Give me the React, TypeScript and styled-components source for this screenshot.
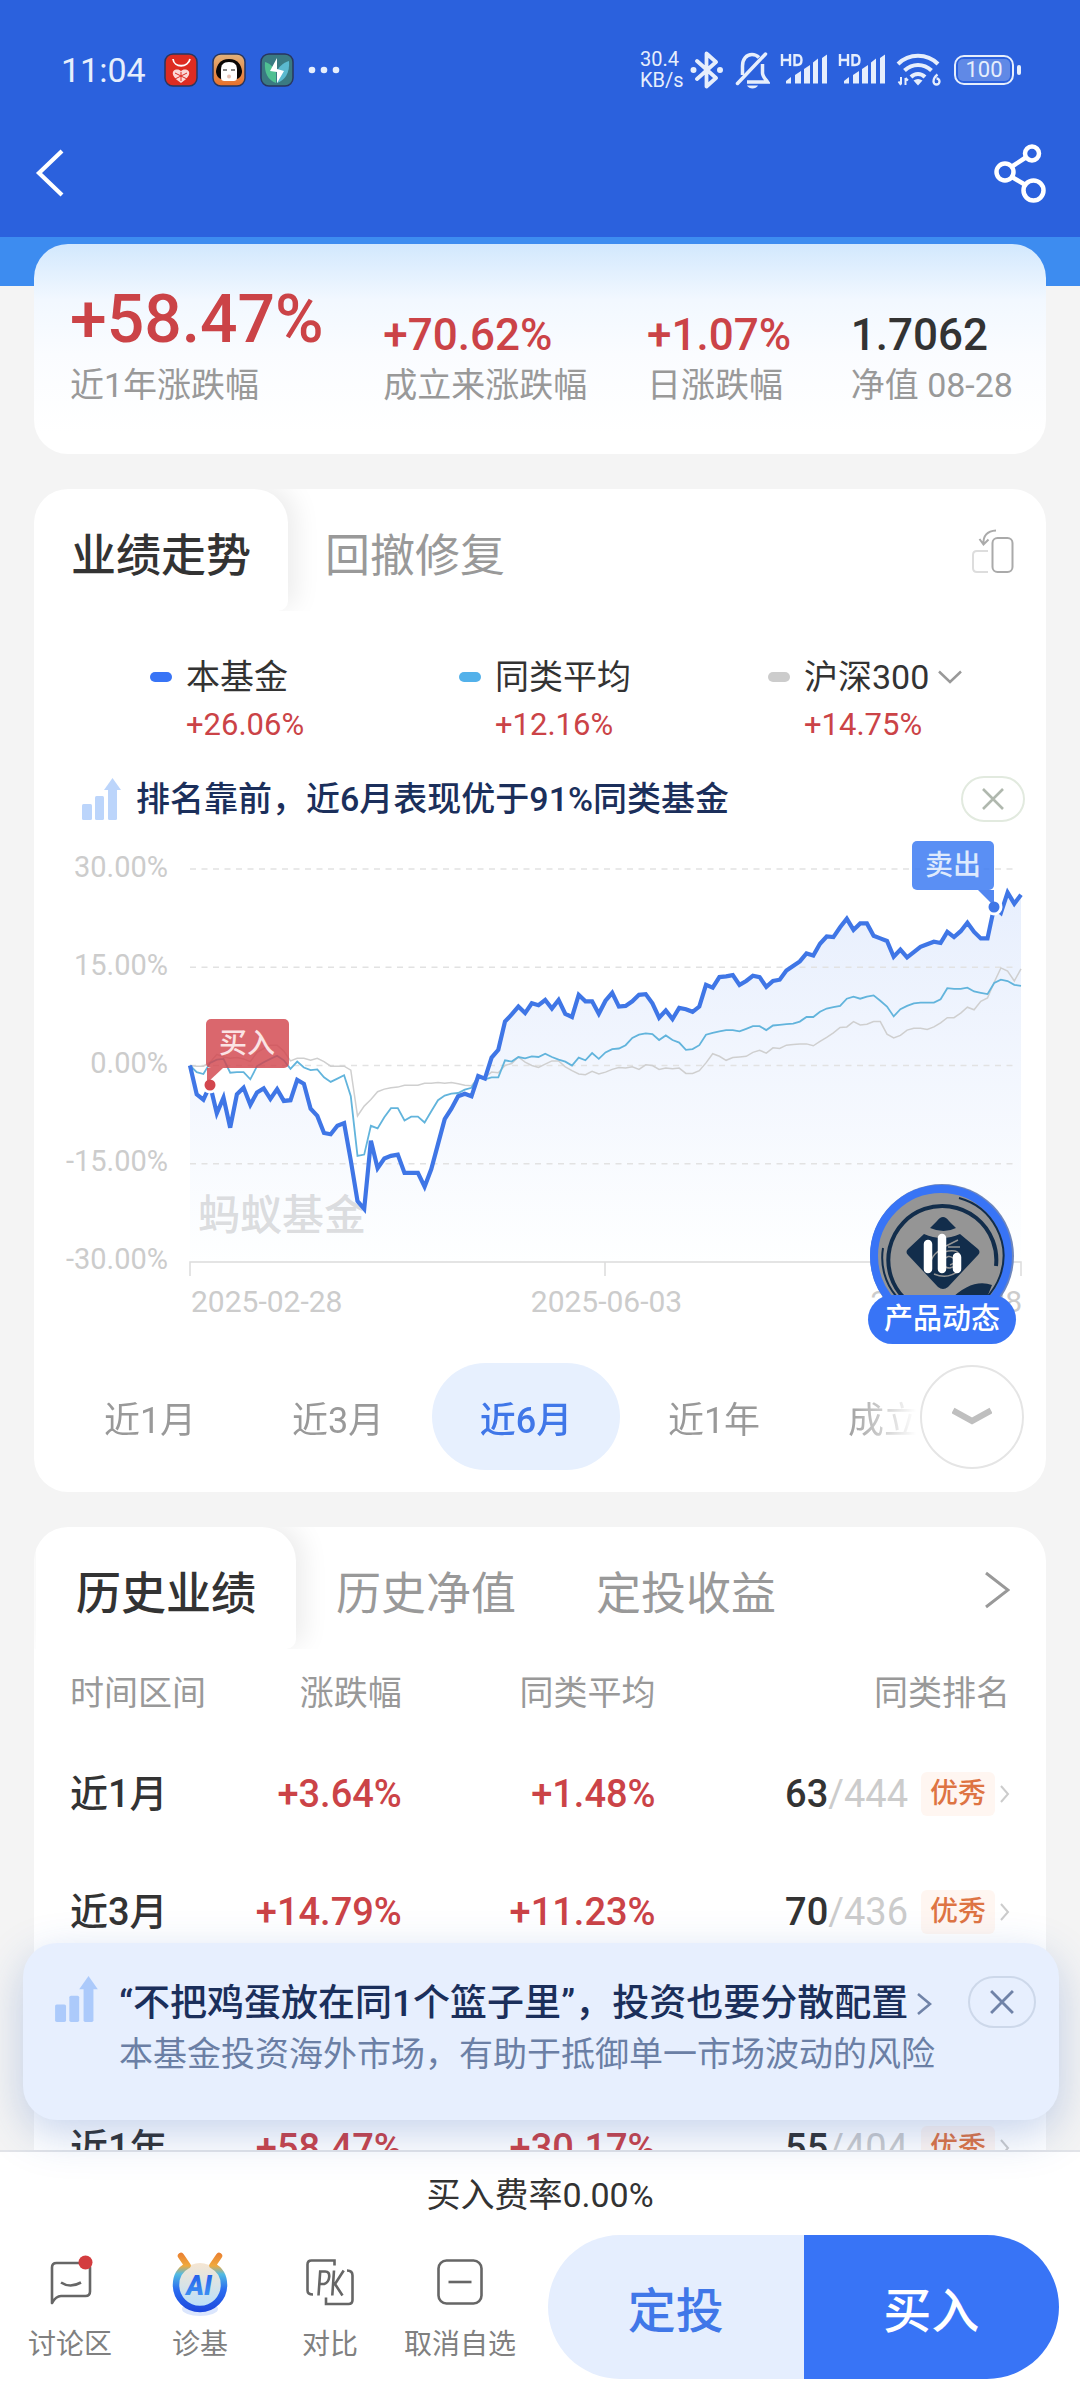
import React, { useState } from "react";
import styled, { createGlobalStyle } from "styled-components";

const GlobalStyle = createGlobalStyle`
  * { box-sizing: border-box; }
  html, body { margin: 0; padding: 0; }
  body {
    font-family: Roboto, "Noto Sans CJK SC", sans-serif;
    font-size: 34px;
    color: #333;
    background: #f4f4f4;
  }
  button, select {
    font: inherit;
    color: inherit;
    background: none;
    border: 0;
    padding: 0;
    margin: 0;
    cursor: pointer;
  }
  svg { display: block; flex: none; }
`;

const red = "#cb4347";
const blue = "#3874f6";
const gray = "#999";
const navy = "#1b2f5b";

/* ---------- page shell ---------- */

const Screen = styled.div`
  display: flex;
  flex-direction: column;
  height: 100vh;
  overflow: hidden;
`;

const Header = styled.header`
  flex: none;
  padding-top: 44px;
  background: #2b61dd;
  color: #e6eefc;
`;

const StatusBar = styled.div`
  display: flex;
  align-items: center;
  justify-content: space-between;
  height: 52px;
  padding: 0 59px 0 61px;
`;

const StatusGroup = styled.div<{ $gap: number }>`
  display: flex;
  align-items: center;
  gap: ${(p) => p.$gap}px;
`;

const Clock = styled.time`
  font-size: 34px;
  line-height: 40px;
  margin-right: 4px;
`;

const NetSpeed = styled.div`
  width: 40px;
  font-size: 20px;
  line-height: 21px;
`;

const Battery = styled.div`
  display: flex;
  align-items: center;
  gap: 3px;
  margin-left: 2px;
  &::after {
    content: "";
    width: 4px;
    height: 10px;
    border-radius: 2px;
    background: #e6eefc;
  }
`;

const BatteryBody = styled.div`
  width: 60px;
  height: 30px;
  padding: 2px;
  border: 2px solid #e6eefc;
  border-radius: 10px;
  span {
    display: block;
    border-radius: 5px;
    background: #6089e6;
    font-size: 22px;
    line-height: 22px;
    text-align: center;
  }
`;

const NavBar = styled.nav`
  display: flex;
  align-items: center;
  justify-content: space-between;
  height: 141px;
  padding: 12px 34px 0 34px;
`;

const Content = styled.main`
  flex: 1;
  min-height: 0;
  overflow-y: auto;
  scrollbar-width: none;
  display: flex;
  flex-direction: column;
  gap: 35px;
  padding: 7px 34px 0;
  background: linear-gradient(#3d8cf0 49px, #f4f4f4 49px);
`;

const Card = styled.section`
  flex: none;
  border-radius: 34px;
  background: #fff;
  overflow: hidden;
`;

/* ---------- summary ---------- */

const Summary = styled(Card)`
  display: flex;
  align-items: flex-end;
  justify-content: space-between;
  padding: 32px 33px 48px 36px;
  background: linear-gradient(#d2e8fd 0, #f2f8ff 56px, #fafcff 110px, #fff 190px);
`;

const StatValue = styled.div<{ $big?: boolean; $dark?: boolean }>`
  font-size: ${(p) => (p.$big ? 66 : 44)}px;
  line-height: ${(p) => (p.$big ? 88 : 58)}px;
  font-weight: 500;
  color: ${(p) => (p.$dark ? "#333" : red)};
`;

const StatLabel = styled.div`
  line-height: 42px;
  color: ${gray};
`;

/* ---------- tabs ---------- */

const Tabs = styled.div<{ $inset?: number }>`
  display: flex;
  align-items: stretch;
  height: 122px;
  margin-bottom: 2px;
  padding-left: ${(p) => p.$inset ?? 0}px;
  overflow: hidden;
`;

const Tab = styled.button<{ $active?: boolean; $pad: number }>`
  padding: 4px ${(p) => p.$pad}px 0;
  font-size: 45px;
  font-weight: ${(p) => (p.$active ? 500 : 400)};
  color: ${(p) => (p.$active ? "#333" : gray)};
  border-radius: 0 34px 10px 0;
  box-shadow: ${(p) => (p.$active ? "8px -4px 26px rgba(0, 0, 0, 0.08)" : "none")};
`;

const TabAction = styled.button<{ $right: number }>`
  margin-left: auto;
  padding: 4px ${(p) => p.$right}px 0 0;
`;

/* ---------- legend ---------- */

const Legend = styled.div`
  display: grid;
  grid-template-columns: 3fr 3fr 2fr;
  padding: 40px 72px 0 116px;
`;

const LegendItem = styled.div`
  display: grid;
  grid-template-columns: 22px auto;
  column-gap: 14px;
  align-items: center;
  justify-content: start;
  line-height: 48px;
  white-space: nowrap;
`;

const LegendDot = styled.i<{ $color: string }>`
  height: 10px;
  border-radius: 5px;
  background: ${(p) => p.$color};
`;

const LegendValue = styled.span`
  grid-column: 2;
  font-size: 31px;
  color: ${red};
`;

const IndexPicker = styled.label`
  display: flex;
  align-items: center;
  gap: 8px;
  select {
    appearance: none;
    outline: none;
    line-height: 48px;
  }
`;

/* ---------- tips ---------- */

const Tip = styled.div`
  display: flex;
  align-items: center;
  margin-top: 27px;
  padding: 0 21px 0 48px;
  color: ${navy};
  line-height: 46px;
  p {
    flex: 1;
    margin: 0 0 0 14px;
    font-weight: 500;
  }
`;

const ClosePill = styled.button<{ $tone: string; $line: string; $wide?: boolean }>`
  display: grid;
  place-items: center;
  width: ${(p) => (p.$wide ? 68 : 64)}px;
  height: ${(p) => (p.$wide ? 52 : 46)}px;
  border: 2px solid ${(p) => p.$line};
  border-radius: 26px;
  color: ${(p) => p.$tone};
`;

/* ---------- chart ---------- */

const ChartBox = styled.div`
  position: relative;
  display: grid;
  grid-template-columns: 134px 1fr;
  column-gap: 18px;
  margin: 15px 20px 0 0;
  color: #ccc;
`;

const AxisY = styled.div`
  display: flex;
  flex-direction: column;
  justify-content: space-between;
  padding: 15px 0 3px;
  font-size: 29px;
  line-height: 30px;
  text-align: right;
`;

const Plot = styled.svg`
  width: 100%;
  height: auto;
`;

const AxisX = styled.div`
  grid-column: 2;
  display: flex;
  justify-content: space-between;
  padding: 8px 4px 0 5px;
  font-size: 30px;
  line-height: 34px;
`;

const Floating = styled.button`
  position: absolute;
  right: 10px;
  top: 346px;
  display: flex;
  flex-direction: column;
  align-items: center;
  span {
    margin-top: -34px;
    padding: 0 16px;
    border-radius: 25px;
    background: ${blue};
    color: #fff;
    font-size: 29px;
    font-weight: 500;
    line-height: 49px;
    white-space: nowrap;
  }
`;

/* ---------- period switch ---------- */

const Periods = styled.div`
  display: flex;
  align-items: center;
  gap: 4px;
  margin-top: 44px;
  padding: 0 22px 22px;
`;

const PeriodList = styled.div`
  flex: 1;
  min-width: 0;
  display: flex;
  overflow: hidden;
  mask-image: linear-gradient(to left, transparent 0, #000 72px);
`;

const Period = styled.button<{ $active: boolean }>`
  flex: 0 0 188px;
  height: 107px;
  border-radius: 54px;
  font-size: 36px;
  font-weight: ${(p) => (p.$active ? 500 : 400)};
  color: ${(p) => (p.$active ? "#4077e8" : gray)};
  background: ${(p) => (p.$active ? "#e7f0fe" : "transparent")};
`;

const MoreButton = styled.button`
  display: grid;
  place-items: center;
  flex: none;
  width: 104px;
  height: 104px;
  border: 2px solid #e5e5e5;
  border-radius: 50%;
`;

/* ---------- history table ---------- */

const HistoryTable = styled.table`
  width: calc(100% - 72px);
  margin: 0 36px;
  border-collapse: collapse;
  table-layout: fixed;
  th, td {
    padding: 0;
    text-align: right;
    white-space: nowrap;
  }
  th:first-child { text-align: left; }
  thead th {
    height: 84px;
    padding-bottom: 6px;
    font-weight: 400;
    color: ${gray};
  }
  tbody th, tbody td {
    height: 118px;
    font-size: 38px;
    line-height: 44px;
    font-weight: 500;
  }
`;

const Col = styled.col<{ $share?: string }>`
  width: ${(p) => p.$share ?? "auto"};
`;

const Rise = styled.td`
  color: ${red};
`;

const Rank = styled.div`
  display: flex;
  align-items: center;
  justify-content: flex-end;
  small {
    font-size: 38px;
    font-weight: 400;
    color: #ccc;
  }
`;

const Badge = styled.span`
  margin: 0 4px 0 13px;
  padding: 0 9px;
  border-radius: 6px;
  background: #fff6f1;
  color: #de7443;
  font-size: 28px;
`;

/* ---------- bottom ---------- */

const Footer = styled.footer`
  position: relative;
  flex: none;
  border-top: 2px solid #e2e4e8;
  background: #fff;
`;

const Banner = styled.aside`
  position: absolute;
  left: 23px;
  right: 21px;
  bottom: calc(100% + 32px);
  display: flex;
  align-items: flex-start;
  height: 177px;
  padding: 33px 23px 0 32px;
  border-radius: 34px;
  background: #e7effe;
  box-shadow: 0 14px 44px rgba(40, 90, 180, 0.26);
`;

const BannerText = styled.div`
  flex: 1;
  margin-left: 20px;
  color: #6b7fa5;
  line-height: 50px;
  white-space: nowrap;
  a {
    display: flex;
    align-items: center;
    gap: 8px;
    margin-top: 3px;
    color: ${navy};
    font-size: 37px;
    font-weight: 500;
    text-decoration: none;
  }
  p { margin: 0; }
`;

const FeeNote = styled.p`
  margin: 0;
  padding-top: 20px;
  line-height: 46px;
  text-align: center;
`;

const ActionBar = styled.div`
  display: flex;
  align-items: center;
  padding: 17px 21px 21px 5px;
`;

const Shortcut = styled.button`
  flex: 0 1 130px;
  display: flex;
  flex-direction: column;
  align-items: center;
  gap: 8px;
  color: #808080;
  font-size: 28px;
  line-height: 40px;
  white-space: nowrap;
`;

const Trade = styled.div`
  flex: 1;
  display: flex;
  height: 144px;
  margin-left: 23px;
  border-radius: 72px;
  overflow: hidden;
`;

const TradeButton = styled.button<{ $primary?: boolean }>`
  flex: 1;
  font-size: 48px;
  font-weight: 500;
  color: ${(p) => (p.$primary ? "#fff" : "#4077e8")};
  background: ${(p) => (p.$primary ? blue : "#e5eefe")};
`;

/* ---------- icons ---------- */

const ChevronDown = () => (
  <svg width="24" height="14" viewBox="0 0 24 14" fill="none" stroke="#999" strokeWidth="2.5" aria-hidden="true">
    <path d="M1 1.5 12 12 23 1.5" />
  </svg>
);

const ChevronRight = ({ w, h, color, stroke }: { w: number; h: number; color: string; stroke: number }) => (
  <svg width={w} height={h} viewBox={`0 0 ${w} ${h}`} fill="none" stroke={color} strokeWidth={stroke} aria-hidden="true">
    <path d={`M2 2 ${w - 2} ${h / 2} 2 ${h - 2}`} />
  </svg>
);

const Cross = ({ size }: { size: number }) => (
  <svg width={size} height={size} viewBox="0 0 22 22" fill="none" stroke="currentColor" strokeWidth="2.6" aria-hidden="true">
    <path d="M1 1 21 21M21 1 1 21" />
  </svg>
);

const Bars = ({ w, h, color }: { w: number; h: number; color: string }) => (
  <svg width={w} height={h} viewBox="0 0 40 42" fill={color} aria-hidden="true">
    <rect x="0" y="26" width="10" height="16" rx="1.5" />
    <rect x="13" y="18" width="9" height="24" rx="1.5" />
    <rect x="26" y="9" width="9" height="33" rx="1.5" />
    <path d="M30.500 0 39 12H22z" />
  </svg>
);

const Signal = () => (
  <svg width="48" height="34" viewBox="0 0 48 34" fill="#e6eefc" aria-hidden="true">
    <g fill="none" stroke="#e6eefc" strokeWidth="2.400">
      <path d="M2 1v12M10 1v12M2 7h8M14.500 2.200V12h2.500q4.500 0 4.500-5T17 2.200z" />
    </g>
    <path d="M6 28l5-4v6.500H6zM15 22l6-4v12.500h-6zM24 16l6-4v18.500h-6zM33 9.500l5-4v25h-5zM42 5l5-3.500v29h-5z" />
  </svg>
);

const AppMall = () => (
  <svg width="34" height="34" viewBox="0 0 34 34" aria-hidden="true">
    <rect x="1" y="1" width="32" height="32" rx="8" fill="#dd2c22" stroke="#29365e" strokeWidth="1.500" />
    <path d="M9 6c1 9 15 9 17 0" fill="none" stroke="#fff" strokeWidth="1.800" />
    <path d="M17 30C8 24 8 20 9.500 18c2-2 6-2 7.500.5 1.500-2.500 5.500-2.500 7.500-.5 1.500 2 1.500 6-7.500 12z" fill="#fbd9d6" />
    <path d="M11 20l12 6M23 20l-12 6M17 19v9" stroke="#dd2c22" strokeWidth="1" />
  </svg>
);

const AppFace = () => (
  <svg width="34" height="34" viewBox="0 0 34 34" aria-hidden="true">
    <defs>
      <linearGradient id="face" x2="0" y2="1">
        <stop stopColor="#e2b27c" />
        <stop offset="1" stopColor="#e8702a" />
      </linearGradient>
    </defs>
    <rect x="1" y="1" width="32" height="32" rx="8" fill="url(#face)" stroke="#29365e" strokeWidth="1.500" />
    <path d="M17 6C8 6 5 12 4 18c0 4 2 7 5 8h16c3-1 5-4 5-8C29 12 26 6 17 6z" fill="#0a0706" />
    <path d="M17 9c-6 0-8 3-8 8v7c0 3 1 4 4 4h8c3 0 4-1 4-4v-7c0-5-2-8-8-8z" fill="#fff" />
    <path d="M11 17h4M19 17h4" stroke="#111" strokeWidth="1.200" />
    <circle cx="17" cy="23.500" r="2" fill="#e6c1b4" />
  </svg>
);

const AppBolt = () => (
  <svg width="34" height="34" viewBox="0 0 34 34" aria-hidden="true">
    <rect x="1" y="1" width="32" height="32" rx="8" fill="#3a7a82" stroke="#29365e" strokeWidth="1.500" />
    <path d="M5 9c4 1 8 4 11 10v11C8 27 4 20 5 9z" fill="#4fc092" />
    <path d="M29 8c-6 2-11 6-12 11v11c8-3 13-10 12-22z" fill="#5bb9cf" />
    <path d="M17 5l-7 13 7 1v11l7-12-7-2z" fill="#fff" />
  </svg>
);

const Dots = () => (
  <svg width="32" height="8" viewBox="0 0 32 8" fill="#e6eefc" aria-hidden="true">
    <circle cx="4" cy="4" r="3.300" /><circle cx="16" cy="4" r="3.300" /><circle cx="28" cy="4" r="3.300" />
  </svg>
);

const Bluetooth = () => (
  <svg width="34" height="38" viewBox="0 0 34 38" fill="none" stroke="#e6eefc" strokeWidth="3.800" strokeLinejoin="round" strokeLinecap="round" aria-hidden="true">
    <path d="M7 10l19 17-9.500 8.500V2.500L26 11 7 28" />
    <circle cx="3.500" cy="19" r="1.500" strokeWidth="3" /><circle cx="30" cy="19" r="1.500" strokeWidth="3" />
  </svg>
);

const BellOff = () => (
  <svg width="36" height="38" viewBox="0 0 36 38" fill="none" stroke="#e6eefc" strokeWidth="3.500" aria-hidden="true">
    <path d="M3.500 32.500 31.500 3" strokeLinecap="round" />
    <path d="M8.500 24V15c0-7 4-11.500 9.500-11.500 3 0 5 1 7 3M28.500 13v9c0 3 2 5 5 9H13" />
    <path d="M13 34.500h11c-2 4-9 4-11 0z" fill="#e6eefc" stroke="none" />
  </svg>
);

const Wifi = () => (
  <svg width="46" height="34" viewBox="0 0 46 34" fill="none" stroke="#e6eefc" strokeWidth="4" aria-hidden="true">
    <path d="M2 11c11-11 29-11 40 0M8.500 17.500c8-7.500 19-7.500 27 0M15 24c4-4 10-4 14 0" />
    <path d="M17.500 27.500q4.500-3 9 0L22 32.500z" fill="#e6eefc" stroke="none" />
    <path d="M5 24v7M2.500 28.500 5 32M9.500 25v7M12 27.500 9.500 25" strokeWidth="2" />
    <path d="M41.500 21.500q-4 3-4 7a3 3 0 1 0 3-3" strokeWidth="2.300" />
  </svg>
);

const BackArrow = () => (
  <svg width="30" height="48" viewBox="0 0 30 48" fill="none" stroke="#fff" strokeWidth="4.200" aria-hidden="true">
    <path d="M28 2 5 24l23 22" />
  </svg>
);

const ShareIcon = () => (
  <svg width="52" height="60" viewBox="0 0 52 60" fill="none" stroke="#fff" strokeWidth="4.500" aria-hidden="true">
    <circle cx="11" cy="29" r="8.500" /><circle cx="38" cy="10.500" r="7" /><circle cx="39.500" cy="47.500" r="10" />
    <path d="M18 23.500 32.500 14M18 34l13.500 8" />
  </svg>
);

const RotateIcon = () => (
  <svg width="42" height="46" viewBox="0 0 42 46" fill="none" strokeWidth="2" aria-hidden="true">
    <rect x="20.500" y="9" width="20" height="34" rx="5" stroke="#aaa" />
    <path d="M16 22H5q-4 0-4 4v13q0 4 4 4h11" stroke="#ddd" />
    <path d="M24 1.500C15 2 11 7 11.500 15M7.500 10l4 5.500 5-5" stroke="#aaa" />
  </svg>
);

const MoreArrow = () => (
  <svg width="40" height="20" viewBox="0 0 40 20" fill="none" stroke="#bfbfbf" strokeWidth="6" aria-hidden="true">
    <path d="M1 3.500 20 14 39 3.500" />
  </svg>
);

const TalkIcon = () => (
  <svg width="60" height="68" viewBox="0 0 60 68" fill="none" stroke="#666" strokeWidth="2.600" strokeLinejoin="round" aria-hidden="true">
    <path d="M12 54V18.500q0-4.500 4.500-4.500h29q4.500 0 4.500 4.500v24q0 4.500-4.500 4.500H21q-5 0-9 7z" />
    <path d="M21 33.500q9 6 20 0" />
    <circle cx="45.500" cy="13.500" r="7" fill="#d33c3f" stroke="none" />
  </svg>
);

const AiIcon = () => (
  <svg width="60" height="68" viewBox="0 0 60 68" aria-hidden="true">
    <defs>
      <linearGradient id="ai-ring" gradientUnits="userSpaceOnUse" x1="0" y1="5" x2="0" y2="64">
        <stop stopColor="#ea8232" />
        <stop offset=".2" stopColor="#f0aa3c" />
        <stop offset=".34" stopColor="#52bbe2" />
        <stop offset=".6" stopColor="#2b6df0" />
        <stop offset="1" stopColor="#1b45dc" />
      </linearGradient>
      <linearGradient id="ai-core" x2="0" y2="1">
        <stop stopColor="#f6e6d2" />
        <stop offset="1" stopColor="#b9e0fb" />
      </linearGradient>
      <linearGradient id="ai-text" x2="0" y2="1">
        <stop stopColor="#1f55e8" />
        <stop offset="1" stopColor="#45a0f6" />
      </linearGradient>
    </defs>
    <ellipse cx="30" cy="60" rx="18" ry="7" fill="#dbe6fd" />
    <circle cx="30" cy="36" r="22" fill="url(#ai-core)" />
    <path d="M11 7l6.500 9.500C9 21 6 28 6 36a24 24 0 0 0 48 0c0-8-3-15-11.500-19.500L49 7" fill="none" stroke="url(#ai-ring)" strokeWidth="6.500" strokeLinecap="round" strokeLinejoin="round" />
    <text x="29" y="46" textAnchor="middle" fontSize="27" fontWeight="900" fontStyle="italic" fill="url(#ai-text)">AI</text>
  </svg>
);

const PkIcon = () => (
  <svg width="60" height="68" viewBox="0 0 60 68" fill="none" stroke="#666" strokeWidth="2.600" aria-hidden="true">
    <path d="M34.500 16.500v-5h-23q-4 0-4 4v26q0 4 5.500 4M47 21.500q5.500 0 5.500 5v24.500q0 4-4 4H26v-6.500" />
    <path d="M18.500 46.500 20.200 22.500h5q4.500 0 4 5.500t-5 7h-4M34 21.500 32.300 46.500M43.700 21.500 35 35l7.500 11.500" />
  </svg>
);

const MinusIcon = () => (
  <svg width="60" height="68" viewBox="0 0 60 68" fill="none" stroke="#666" strokeWidth="2.600" aria-hidden="true">
    <rect x="8.500" y="11.500" width="43" height="43" rx="8" />
    <path d="M18.500 33h23" />
  </svg>
);

const CoinIcon = () => (
  <svg width="146" height="146" viewBox="-73 -73 146 146" aria-hidden="true">
    <circle r="72" fill="#6d86bd" />
    <circle cx="-1" r="67" fill="#959595" stroke={blue} strokeWidth="8" />
    <g fill="none" stroke="#122d4b">
      <path d="M-38 42A54 54 0 1 1 54 10" strokeWidth="4" />
      <path d="M17-58A60 60 0 0 1 58 20 A60 60 0 0 1 44 42M-59-8A60 60 0 0 0-46 40" strokeWidth="2" />
    </g>
    <g fill="#122d4b">
      <path d="M1-39q3 0 6 4l7 7q-12 6-26 0l7-7q3-4 6-4z" />
      <path d="M-18-22Q0-14 18-22L36-7q3 3 0 6L6 31q-5 4-10 0L-34-1q-3-3 0-6z" />
      <path d="M8 44Q30 22 50 29 44 46 34 56H-20z" />
    </g>
    <g fill="none" stroke="#959595" strokeWidth="1.500">
      <path d="M4-10l12-6M6-9h12M2-4q14-4 16 4T8 12q-8 0-6-8 4-6 9-2t-3 7M-14 14Q-10-4 0-6M-8 18q14 6 26-4" />
    </g>
    <g stroke="#fff" strokeWidth="8.500" strokeLinecap="round">
      <path d="M-14-12V13M0-18V13M15 1V13" />
    </g>
  </svg>
);

/* ---------- data ---------- */

const FUND = [
  0, -4.4, -5.2, -3, -7.3, -4.9, -9.5, -4.4, -3.4, -6, -4.1, -3.5, -5.1, -3.6, -5.4, -5.3, -2.2, -2.8, -6.6, -7.7,
  -10.3, -10.5, -9.2, -8.8, -14.5, -20.7, -21.9, -11.5, -15.7, -14.2, -13.8, -13.6, -16.4, -16.4, -16.4, -18.5,
  -15.8, -12, -8.2, -6.6, -4.7, -4.3, -4.7, -1.6, -2, 1.2, 2.4, 6.7, 7.8, 9, 8, 9.5, 9.2, 10, 8.7, 10, 7.9, 7.4,
  10.8, 9.8, 9.8, 7.9, 9.9, 11.1, 9, 9.1, 9.8, 10.8, 10.9, 9.5, 7.3, 8.4, 7.1, 8.8, 8.6, 8.2, 9, 12.3, 11.9, 13.5,
  13.6, 13.8, 12.3, 12.9, 13.7, 13.5, 12, 12.9, 13.1, 14.5, 15.2, 15.9, 17.1, 16.8, 18.6, 19.7, 19.6, 21.1, 22.4,
  20.7, 21.7, 21.7, 19.8, 19.4, 19, 16.6, 17.7, 16.5, 17.3, 18.1, 18.5, 18.9, 18.7, 20.4, 19.6, 20.5, 21.8, 20.4,
  19.4, 19.4, 24.2, 23.3, 26.4, 24.7, 26.06,
];

const PEERS = [
  0, -1, -1.3, 0.4, 0.9, 1, -1.1, -1, -1, -2.1, -0.1, 0.5, 1, 1.5, 0.8, -0.5, 0.6, -0.3, -0.7, -0.6, -1.8, -2.5, -2,
  -1.5, -4.7, -13.8, -13.6, -9.2, -9.6, -7.9, -6.5, -6.5, -8.4, -7.8, -7.8, -8.7, -7, -5.3, -4.6, -4.3, -4.2, -3.7,
  -3.4, -1.7, -2.1, -1.8, -1.8, 0.8, 0.6, 1.3, 1.1, 1.4, 1.3, 1.8, 1.3, 0.9, 0.6, 0, 1.2, 0.8, 1.9, 1, 2, 2.5, 2.6,
  3.1, 4.2, 4.7, 4.9, 4.8, 3.9, 4.6, 3.9, 3.5, 2.4, 2.5, 3.1, 4.7, 5, 5.2, 5.4, 5.4, 5.2, 5.6, 6, 6, 5.4, 6.1, 6.2,
  6.3, 6.4, 6.7, 7.4, 7.4, 8.2, 8.7, 8.9, 9.1, 10.2, 10.5, 10.2, 10.5, 10.7, 9.9, 9, 7.5, 8.6, 9.1, 9.5, 9.6, 9.6,
  9.6, 10.1, 11.8, 11.7, 11.7, 11.9, 11.3, 11.1, 10.9, 12.6, 13.1, 12.9, 12.3, 12.16,
];

const CSI300 = [
  0, -0.1, -0.1, 0.5, 1.7, 1.3, 1.1, 1.2, 1, 0.6, 2, 2.6, 3.1, 3.1, 2.2, 0.7, 1.1, 1.1, 0.8, 1.1, 0.6, -0.1, -0.1,
  -0.1, -0.7, -7.7, -6.2, -5.2, -4, -3.6, -3.4, -3.3, -3, -3, -3, -2.7, -2.7, -2.6, -2.7, -2.6, -2.8, -3, -3.1, -1.8,
  -1.8, -1, -1.1, 0, 0.3, 1.3, 0.5, 0, -0.3, 0.2, 0.7, 0.7, -0.2, -0.8, -1.3, -1.4, -0.9, -1.3, -1, -0.6, -0.3, -0.4,
  -0.2, -0.6, 0.1, 0, -0.6, -0.4, -0.5, -0.4, -1.2, -1.2, -0.8, 0.4, 1.8, 1.4, 0.8, 1.2, 1.3, 1.4, 2, 2.3, 1.9, 2.7,
  2.6, 3.1, 3.2, 3.3, 3.3, 3, 3.7, 4.3, 5, 5.8, 5.9, 6.7, 6.2, 6.3, 6.7, 6.7, 4.8, 4.2, 4.6, 5.4, 5.7, 5.7, 5.5, 5.9,
  6.5, 7.3, 7.3, 8, 8.9, 8.5, 9.8, 10.3, 12.7, 14.9, 14.4, 12.9, 14.75,
];

const TICKS = ["30.00%", "15.00%", "0.00%", "-15.00%", "-30.00%"];
const PLOT_W = 831;
const PLOT_H = 393;

const px = (i: number) => (i * PLOT_W) / (FUND.length - 1);
const py = (v: number) => ((30 - v) * PLOT_H) / 60;
const line = (values: number[]) => values.map((v, i) => `${px(i).toFixed(1)},${py(v).toFixed(1)}`).join(" ");

const HISTORY = [
  { span: "近1月", rise: "+3.64%", peers: "+1.48%", rank: "63", total: "/444" },
  { span: "近3月", rise: "+14.79%", peers: "+11.23%", rank: "70", total: "/436" },
  { span: "近6月", rise: "+26.06%", peers: "+12.16%", rank: "", total: "" },
  { span: "近1年", rise: "+58.47%", peers: "+30.17%", rank: "55", total: "/404" },
];

const PERIODS = ["近1月", "近3月", "近6月", "近1年", "成立来"];

const TrendPlot = () => (
  <Plot viewBox="-4 -32 840 440" role="img" aria-label="业绩走势">
    <defs>
      <linearGradient id="area" x2="0" y2={PLOT_H} gradientUnits="userSpaceOnUse">
        <stop stopColor="#e6eefd" />
        <stop offset=".5" stopColor="#f2f6fe" />
        <stop offset="1" stopColor="#feffff" />
      </linearGradient>
    </defs>
    <polygon points={`0,${PLOT_H} ${line(FUND)} ${PLOT_W},${PLOT_H}`} fill="url(#area)" />
    {[0, 1, 2, 3].map((n) => (
      <path key={n} d={`M0 ${(n * PLOT_H) / 4}H${PLOT_W - 4}`} stroke="#e2e2e2" strokeWidth="1.500" strokeDasharray="6 5.500" />
    ))}
    <path d={`M0 ${PLOT_H + 14}V${PLOT_H}H${PLOT_W}v14M415 ${PLOT_H}v14`} fill="none" stroke="#dcdcdc" strokeWidth="1.500" />
    <text x="8" y="361" fontSize="42" fontWeight="500" fill="#c9cacd" fillOpacity=".65">蚂蚁基金</text>
    <polyline points={line(CSI300)} fill="none" stroke="#cfcfcf" strokeWidth="1.500" />
    <polyline points={line(PEERS)} fill="none" stroke="#62b4dc" strokeWidth="1.800" />
    <polyline points={line(FUND)} fill="none" stroke="#3f76e6" strokeWidth="4.200" />

    <circle cx="20" cy="216" r="8.500" fill="#fff" />
    <path d="M17 199h16L17 214z" fill="#d2464d" fillOpacity=".82" />
    <rect x="16" y="150" width="83" height="49" rx="5" fill="#d2464d" fillOpacity=".82" />
    <circle cx="20" cy="216" r="5.500" fill="#d2464d" />
    <text x="57" y="184" fontSize="28" fontWeight="500" textAnchor="middle" fill="#fbe3e4">买入</text>

    <circle cx="804" cy="38" r="8.500" fill="#fff" />
    <path d="M788 21h16v16z" fill="#3f79ee" fillOpacity=".9" />
    <rect x="722" y="-28" width="82" height="49" rx="5" fill="#3a7af2" fillOpacity=".84" />
    <circle cx="804" cy="38" r="5.500" fill="#3f76e6" />
    <text x="763" y="6" fontSize="28" fontWeight="500" textAnchor="middle" fill="#deeafd">卖出</text>
  </Plot>
);

export default function App() {
  const [period, setPeriod] = useState("近6月");

  return (
    <Screen>
      <GlobalStyle />
      <Header>
        <StatusBar>
          <StatusGroup $gap={14}>
            <Clock>11:04</Clock>
            <AppMall />
            <AppFace />
            <AppBolt />
            <Dots />
          </StatusGroup>
          <StatusGroup $gap={10}>
            <NetSpeed>30.4 KB/s</NetSpeed>
            <Bluetooth />
            <BellOff />
            <Signal />
            <Signal />
            <Wifi />
            <Battery>
              <BatteryBody><span>100</span></BatteryBody>
            </Battery>
          </StatusGroup>
        </StatusBar>
        <NavBar>
          <button aria-label="返回"><BackArrow /></button>
          <button aria-label="分享"><ShareIcon /></button>
        </NavBar>
      </Header>

      <Content>
        <Summary>
          <div>
            <StatValue $big>+58.47%</StatValue>
            <StatLabel>近1年涨跌幅</StatLabel>
          </div>
          <div>
            <StatValue>+70.62%</StatValue>
            <StatLabel>成立来涨跌幅</StatLabel>
          </div>
          <div>
            <StatValue>+1.07%</StatValue>
            <StatLabel>日涨跌幅</StatLabel>
          </div>
          <div>
            <StatValue $dark>1.7062</StatValue>
            <StatLabel>净值 08-28</StatLabel>
          </div>
        </Summary>

        <Card>
          <Tabs>
            <Tab $active $pad={37}>业绩走势</Tab>
            <Tab $pad={37}>回撤修复</Tab>
            <TabAction $right={32} aria-label="横屏查看"><RotateIcon /></TabAction>
          </Tabs>

          <Legend>
            <LegendItem>
              <LegendDot $color={blue} />
              <span>本基金</span>
              <LegendValue>+26.06%</LegendValue>
            </LegendItem>
            <LegendItem>
              <LegendDot $color="#53b1ea" />
              <span>同类平均</span>
              <LegendValue>+12.16%</LegendValue>
            </LegendItem>
            <LegendItem>
              <LegendDot $color="#ccc" />
              <IndexPicker>
                <select aria-label="对比指数">
                  <option>沪深300</option>
                </select>
                <ChevronDown />
              </IndexPicker>
              <LegendValue>+14.75%</LegendValue>
            </LegendItem>
          </Legend>

          <Tip>
            <Bars w={40} h={42} color="#bcd5fb" />
            <p>排名靠前，近6月表现优于91%同类基金</p>
            <ClosePill $tone="#b0b8ae" $line="#e2eadf" aria-label="关闭"><Cross size={22} /></ClosePill>
          </Tip>

          <ChartBox>
            <AxisY>{TICKS.map((t) => <span key={t}>{t}</span>)}</AxisY>
            <TrendPlot />
            <AxisX>
              <span>2025-02-28</span>
              <span>2025-06-03</span>
              <span>2025-08-28</span>
            </AxisX>
            <Floating>
              <CoinIcon />
              <span>产品动态</span>
            </Floating>
          </ChartBox>

          <Periods>
            <PeriodList>
              {PERIODS.map((p) => (
                <Period key={p} $active={p === period} onClick={() => setPeriod(p)}>{p}</Period>
              ))}
            </PeriodList>
            <MoreButton aria-label="更多区间"><MoreArrow /></MoreButton>
          </Periods>
        </Card>

        <Card>
          <Tabs $inset={2}>
            <Tab $active $pad={40}>历史业绩</Tab>
            <Tab $pad={40}>历史净值</Tab>
            <Tab $pad={40}>定投收益</Tab>
            <TabAction $right={36} aria-label="查看全部">
              <ChevronRight w={26} h={38} color="#999" stroke={3} />
            </TabAction>
          </Tabs>
          <HistoryTable>
            <colgroup>
              <Col $share="18.3%" />
              <Col $share="17%" />
              <Col $share="27%" />
              <Col />
            </colgroup>
            <thead>
              <tr>
                <th scope="col">时间区间</th>
                <th scope="col">涨跌幅</th>
                <th scope="col">同类平均</th>
                <th scope="col">同类排名</th>
              </tr>
            </thead>
            <tbody>
              {HISTORY.map((r) => (
                <tr key={r.span}>
                  <th scope="row">{r.span}</th>
                  <Rise>{r.rise}</Rise>
                  <Rise>{r.peers}</Rise>
                  <td>
                    <Rank>
                      {r.rank}<small>{r.total}</small>
                      <Badge>优秀</Badge>
                      <ChevronRight w={11} h={20} color="#ccc" stroke={2} />
                    </Rank>
                  </td>
                </tr>
              ))}
            </tbody>
          </HistoryTable>
        </Card>
      </Content>

      <Footer>
        <Banner>
          <Bars w={44} h={46} color="#accafb" />
          <BannerText>
            <a href="#allocation">
              “不把鸡蛋放在同1个篮子里”，投资也要分散配置
              <ChevronRight w={16} h={24} color="#7083a8" stroke={2.6} />
            </a>
            <p>本基金投资海外市场，有助于抵御单一市场波动的风险</p>
          </BannerText>
          <ClosePill $wide $tone="#7083a8" $line="#cdd8ea" aria-label="关闭提示"><Cross size={24} /></ClosePill>
        </Banner>
        <FeeNote>买入费率0.00%</FeeNote>
        <ActionBar>
          <Shortcut><TalkIcon />讨论区</Shortcut>
          <Shortcut><AiIcon />诊基</Shortcut>
          <Shortcut><PkIcon />对比</Shortcut>
          <Shortcut><MinusIcon />取消自选</Shortcut>
          <Trade>
            <TradeButton>定投</TradeButton>
            <TradeButton $primary>买入</TradeButton>
          </Trade>
        </ActionBar>
      </Footer>
    </Screen>
  );
}
